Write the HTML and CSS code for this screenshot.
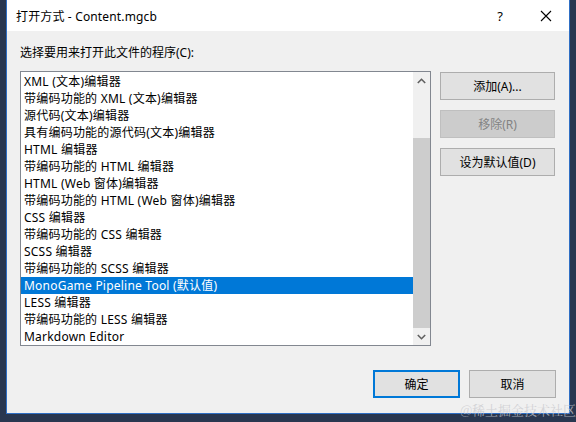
FILE: index.html
```html
<!DOCTYPE html>
<html lang="zh-CN">
<head>
<meta charset="utf-8">
<title>打开方式</title>
<link rel="stylesheet" href="styles.css">
</head>
<body>
<div class="window">
  <div class="titlebar">
    <span class="title">打开方式 - Content.mgcb</span>
    <span class="help">?</span>
    <span class="close">
      <svg width="12" height="12" viewBox="0 0 12 12"><path d="M1 1L11 11M11 1L1 11" stroke="#000" stroke-width="1.1" fill="none"/></svg>
    </span>
  </div>
  <div class="content">
    <div class="label">选择要用来打开此文件的程序(C):</div>
    <div class="main">
      <div class="listbox">
        <div class="items">
          <div class="item">XML (文本)编辑器</div>
          <div class="item">带编码功能的 XML (文本)编辑器</div>
          <div class="item">源代码(文本)编辑器</div>
          <div class="item">具有编码功能的源代码(文本)编辑器</div>
          <div class="item">HTML 编辑器</div>
          <div class="item">带编码功能的 HTML 编辑器</div>
          <div class="item">HTML (Web 窗体)编辑器</div>
          <div class="item">带编码功能的 HTML (Web 窗体)编辑器</div>
          <div class="item">CSS 编辑器</div>
          <div class="item">带编码功能的 CSS 编辑器</div>
          <div class="item">SCSS 编辑器</div>
          <div class="item">带编码功能的 SCSS 编辑器</div>
          <div class="item selected">MonoGame Pipeline Tool (默认值)</div>
          <div class="item">LESS 编辑器</div>
          <div class="item">带编码功能的 LESS 编辑器</div>
          <div class="item">Markdown Editor</div>
        </div>
        <div class="scrollbar">
          <div class="arrow">
            <svg width="9" height="6" viewBox="0 0 9 6"><path d="M0.8 5L4.5 1.3L8.2 5" stroke="#606060" stroke-width="1.6" fill="none"/></svg>
          </div>
          <div class="track"><div class="thumb"></div></div>
          <div class="arrow">
            <svg width="9" height="6" viewBox="0 0 9 6"><path d="M0.8 1L4.5 4.7L8.2 1" stroke="#606060" stroke-width="1.6" fill="none"/></svg>
          </div>
        </div>
      </div>
      <div class="side">
        <div class="btn">添加(A)...</div>
        <div class="btn disabled">移除(R)</div>
        <div class="btn">设为默认值(D)</div>
      </div>
    </div>
    <div class="footer">
      <div class="btn default">确定</div>
      <div class="btn">取消</div>
    </div>
  </div>
</div>
<div class="watermark">@稀土掘金技术社区</div>
</body>
</html>
```

FILE: styles.css
```css
html, body {
  margin: 0;
  padding: 0;
}
body {
  width: 576px;
  height: 422px;
  background: #293750;
  overflow: hidden;
  position: relative;
  font-family: "Noto Sans", "Noto Sans CJK SC", sans-serif;
  font-size: 12px;
  color: #000;
}
.window {
  margin-left: 6px;
  width: 562px;
  height: 413px;
  border: 1px solid #2f6fc4;
  border-top: none;
  display: flex;
  flex-direction: column;
  background: #f0f0f0;
}
.titlebar {
  height: 31px;
  background: #fff;
  display: flex;
  align-items: center;
  flex-shrink: 0;
}
.title {
  margin-left: 9px;
  font-size: 12px;
  letter-spacing: 0.15px;
  flex: 1;
  padding-top: 1px;
}
.help {
  width: 12px;
  text-align: center;
  font-size: 13px;
  margin-right: 34px;
}
.close {
  width: 12px;
  height: 12px;
  display: flex;
  margin-right: 17px;
}
.content {
  flex: 1;
  padding: 14px 13px 0 13px;
  display: flex;
  flex-direction: column;
}
.label {
  height: 16px;
  line-height: 16px;
}
.main {
  margin-top: 10px;
  display: flex;
  gap: 9px;
}
.listbox {
  width: 409px;
  height: 273px;
  border: 1px solid #828790;
  background: #fff;
  display: flex;
  overflow: hidden;
}
.items {
  flex: 1;
  padding-top: 1px;
  overflow: hidden;
}
.item {
  height: 17px;
  line-height: 17px;
  padding-left: 3px;
  white-space: nowrap;
  letter-spacing: 0.22px;
}
.item.selected {
  background: #0078d7;
  color: #fff;
}
.scrollbar {
  width: 17px;
  background: #f0f0f0;
  display: flex;
  flex-direction: column;
}
.arrow {
  height: 17px;
  display: flex;
  align-items: center;
  justify-content: center;
  flex-shrink: 0;
}
.track {
  flex: 1;
  padding-top: 49px;
  display: flex;
  flex-direction: column;
}
.thumb {
  flex: 1;
  background: #cdcdcd;
}
.side {
  width: 115px;
  display: flex;
  flex-direction: column;
  padding-top: 1px;
  gap: 10px;
}
.btn {
  height: 26px;
  border: 1px solid #adadad;
  background: #e1e1e1;
  display: flex;
  align-items: center;
  justify-content: center;
  box-sizing: content-box;
}
.btn.disabled {
  background: #cccccc;
  border-color: #bfbfbf;
  color: #838383;
}
.footer {
  margin-top: 24px;
  display: flex;
  justify-content: flex-end;
  gap: 9px;
}
.footer .btn {
  width: 85px;
}
.footer .btn.default {
  border: 2px solid #0078d7;
  width: 83px;
  height: 24px;
}
.watermark {
  position: absolute;
  right: 0;
  bottom: 3px;
  font-family: "Noto Serif CJK SC", "Noto Sans CJK SC", serif;
  font-size: 13px;
  color: rgba(200, 200, 205, 0.75);
}
```
